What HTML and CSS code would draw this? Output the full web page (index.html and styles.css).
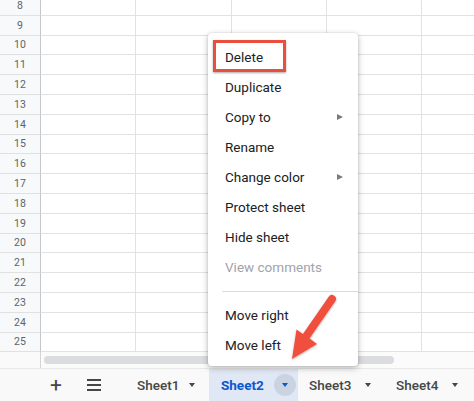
FILE: index.html
```html
<!DOCTYPE html>
<html>
<head>
<meta charset="utf-8">
<link rel="stylesheet" href="styles.css">
</head>
<body>
<div class="app">
  <div class="grid">
    <div class="row"><div class="rh">8</div><div class="c"></div><div class="c"></div><div class="c"></div><div class="c"></div><div class="c"></div></div>
    <div class="row"><div class="rh">9</div><div class="c"></div><div class="c"></div><div class="c"></div><div class="c"></div><div class="c"></div></div>
    <div class="row"><div class="rh">10</div><div class="c"></div><div class="c"></div><div class="c"></div><div class="c"></div><div class="c"></div></div>
    <div class="row"><div class="rh">11</div><div class="c"></div><div class="c"></div><div class="c"></div><div class="c"></div><div class="c"></div></div>
    <div class="row"><div class="rh">12</div><div class="c"></div><div class="c"></div><div class="c"></div><div class="c"></div><div class="c"></div></div>
    <div class="row"><div class="rh">13</div><div class="c"></div><div class="c"></div><div class="c"></div><div class="c"></div><div class="c"></div></div>
    <div class="row"><div class="rh">14</div><div class="c"></div><div class="c"></div><div class="c"></div><div class="c"></div><div class="c"></div></div>
    <div class="row"><div class="rh">15</div><div class="c"></div><div class="c"></div><div class="c"></div><div class="c"></div><div class="c"></div></div>
    <div class="row"><div class="rh">16</div><div class="c"></div><div class="c"></div><div class="c"></div><div class="c"></div><div class="c"></div></div>
    <div class="row"><div class="rh">17</div><div class="c"></div><div class="c"></div><div class="c"></div><div class="c"></div><div class="c"></div></div>
    <div class="row"><div class="rh">18</div><div class="c"></div><div class="c"></div><div class="c"></div><div class="c"></div><div class="c"></div></div>
    <div class="row"><div class="rh">19</div><div class="c"></div><div class="c"></div><div class="c"></div><div class="c"></div><div class="c"></div></div>
    <div class="row"><div class="rh">20</div><div class="c"></div><div class="c"></div><div class="c"></div><div class="c"></div><div class="c"></div></div>
    <div class="row"><div class="rh">21</div><div class="c"></div><div class="c"></div><div class="c"></div><div class="c"></div><div class="c"></div></div>
    <div class="row"><div class="rh">22</div><div class="c"></div><div class="c"></div><div class="c"></div><div class="c"></div><div class="c"></div></div>
    <div class="row"><div class="rh">23</div><div class="c"></div><div class="c"></div><div class="c"></div><div class="c"></div><div class="c"></div></div>
    <div class="row"><div class="rh">24</div><div class="c"></div><div class="c"></div><div class="c"></div><div class="c"></div><div class="c"></div></div>
    <div class="row"><div class="rh">25</div><div class="c"></div><div class="c"></div><div class="c"></div><div class="c"></div><div class="c"></div></div>
  </div>
  <div class="hscroll">
    <div class="hs-corner"></div>
    <div class="hs-track"><div class="hs-thumb"></div></div>
  </div>
  <div class="tabbar">
    <div class="tb-btn plus">+</div>
    <div class="tb-btn menu-btn"><span></span><span></span><span></span></div>
    <div class="tab t1"><span class="tname">Sheet1</span><span class="caret"></span></div>
    <div class="tab active"><span class="tname">Sheet2</span><span class="caret-circle"><span class="caret"></span></span></div>
    <div class="tab t3"><span class="tname">Sheet3</span><span class="caret"></span></div>
    <div class="tab t4"><span class="tname">Sheet4</span><span class="caret"></span></div>
  </div>

  <div class="ctx">
    <div class="item">Delete</div>
    <div class="item">Duplicate</div>
    <div class="item">Copy to<span class="sub"></span></div>
    <div class="item">Rename</div>
    <div class="item">Change color<span class="sub"></span></div>
    <div class="item">Protect sheet</div>
    <div class="item">Hide sheet</div>
    <div class="item disabled">View comments</div>
    <div class="sep"></div>
    <div class="item">Move right</div>
    <div class="item">Move left</div>
    <div class="hl"></div>
  </div>

  <svg class="arrow" width="474" height="401" viewBox="0 0 474 401">
    <defs>
      <filter id="sh" x="-20%" y="-20%" width="140%" height="140%">
        <feDropShadow dx="0" dy="1" stdDeviation="1.2" flood-color="#000" flood-opacity="0.3"/>
      </filter>
    </defs>
    <g filter="url(#sh)" fill="#f0503c">
      <line x1="332" y1="299" x2="305" y2="338" stroke="#f0503c" stroke-width="8" stroke-linecap="round"/>
      <polygon points="292,359 296.5,329.5 303,334 308.5,337.5 317,344"/>
    </g>
  </svg>
</div>
</body>
</html>
```

FILE: styles.css
```css
html, body {
  margin: 0;
  padding: 0;
  background: #fff;
}
.app {
  position: relative;
  width: 474px;
  height: 401px;
  overflow: hidden;
  font-family: Roboto, "Liberation Sans", Arial, sans-serif;
  display: flex;
  flex-direction: column;
}
.grid {
  margin-top: -4px;
  display: flex;
  flex-direction: column;
}
.row {
  display: flex;
  height: 19.8px;
  box-sizing: border-box;
}
.rh {
  width: 41px;
  flex: none;
  box-sizing: border-box;
  background: #f8f9fa;
  border-right: 1.5px solid #c7c7c7;
  border-bottom: 1px solid #e1e1e1;
  color: #5f6368;
  font-size: 10.5px;
  display: flex;
  align-items: center;
  justify-content: center;
}
.c {
  width: 95.3px;
  flex: none;
  box-sizing: border-box;
  border-right: 1px solid #e2e2e2;
  border-bottom: 1px solid #e2e2e2;
}
.hscroll {
  height: 17px;
  display: flex;
  flex: none;
  border-bottom: 1px solid #e8e8e8;
  box-sizing: border-box;
}
.hs-corner {
  width: 41px;
  box-sizing: border-box;
  border-right: 1.5px solid #d6d6d6;
  background: #fafafa;
}
.hs-track {
  flex: 1;
  padding: 4px 2px 4px 3px;
  background: #fbfbfb;
}
.hs-thumb {
  width: 350px;
  height: 8px;
  border-radius: 4px;
  background: #dadce0;
}
.tabbar {
  flex: 1;
  display: flex;
  align-items: stretch;
  background: #f9f9fa;
  color: #444746;
  font-size: 13.5px;
  font-weight: 500;
}
.tb-btn {
  display: flex;
  align-items: center;
  justify-content: center;
  width: 36px;
}
.plus {
  margin-left: 38px;
  font-size: 21px;
  font-weight: 400;
  color: #444746;
}
.menu-btn {
  margin-left: 2px;
  flex-direction: column;
  gap: 3px;
}
.menu-btn span {
  display: block;
  width: 14px;
  height: 1.8px;
  background: #444746;
}
.tab {
  display: flex;
  align-items: center;
  box-sizing: border-box;
}
.t1 {
  margin-left: 13px;
  width: 84px;
  padding-left: 12px;
}
.caret {
  width: 0;
  height: 0;
  border-left: 3.5px solid transparent;
  border-right: 3.5px solid transparent;
  border-top: 4px solid #444746;
}
.tname { margin-right: 11px; }
.t1 .tname { margin-right: 10px; }
.active {
  width: 89px;
  padding-left: 12px;
  background: #e1e8f5;
  color: #0b57d0;
  font-weight: 700;
}
.active .tname { margin-right: 10px; }
.caret-circle {
  width: 22px;
  height: 22px;
  border-radius: 50%;
  background: #c9d3e2;
  display: flex;
  align-items: center;
  justify-content: center;
}
.active .caret { border-top-color: #0b57d0; }
.t3 {
  width: 87px;
  padding-left: 11px;
}
.t3 .tname { margin-right: 14px; }
.t4 {
  padding-left: 11px;
}
.t4 .tname { margin-right: 14px; }

.ctx {
  position: absolute;
  left: 208px;
  top: 33px;
  width: 150px;
  padding: 9px 0 6px;
  background: #fff;
  border-radius: 4px;
  box-shadow: 0 2px 6px rgba(0,0,0,0.28), 0 0 2px rgba(0,0,0,0.12);
  color: #202124;
  font-size: 13.5px;
}
.item {
  height: 30px;
  display: flex;
  align-items: center;
  padding-left: 17px;
  position: relative;
}
.item.disabled { color: #a0a4a8; }
.sub {
  position: absolute;
  left: 129px;
  top: 12px;
  width: 0;
  height: 0;
  border-top: 3.5px solid transparent;
  border-bottom: 3.5px solid transparent;
  border-left: 6px solid #7a7a7a;
}
.sep {
  height: 1px;
  background: #dadce0;
  margin: 9px 0 8px 14px;
}
.hl {
  position: absolute;
  left: 5px;
  top: 7px;
  width: 73px;
  height: 32px;
  box-sizing: border-box;
  border: 3.5px solid #ea4e3c;
  box-shadow: 0 1px 2px rgba(0,0,0,0.35);
}
.arrow {
  position: absolute;
  left: 0;
  top: 0;
  pointer-events: none;
}
```
